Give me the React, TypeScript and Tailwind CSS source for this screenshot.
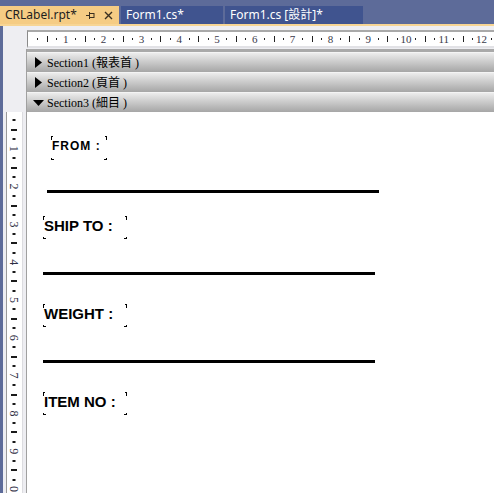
import React from 'react';

const UNIT = 37.8;

function HRuler() {
  const ticks: React.ReactNode[] = [];
  for (let k = 1; k < 50; k++) {
    const x = (k * UNIT) / 4;
    if (x > 470) break;
    if (k % 4 === 0) {
      ticks.push(
        <text key={k} x={x} y={11} fontSize={11} textAnchor="middle" fill="#3a3a4a" fontFamily="'Liberation Serif', serif">
          {k / 4}
        </text>
      );
    } else if (k % 4 === 2) {
      ticks.push(<rect key={k} x={Math.round(x)} y={4} width={1} height={6} fill="#222" />);
    } else {
      ticks.push(<rect key={k} x={Math.round(x)} y={6} width={1} height={2} fill="#222" />);
    }
  }
  return (
    <svg width={467} height={14} className="block">
      {ticks}
    </svg>
  );
}

function VRuler() {
  const ticks: React.ReactNode[] = [];
  const o = -1;
  for (let k = 1; k < 50; k++) {
    const y = o + (k * UNIT) / 4;
    if (y > 385) break;
    if (k % 4 === 0) {
      const n = (k / 4) % 10;
      ticks.push(
        <text
          key={k}
          x={7}
          y={y}
          fontSize={12}
          textAnchor="middle"
          dominantBaseline="central"
          fill="#2e2e44"
          fontFamily="'Liberation Serif', serif"
          transform={`rotate(90 7 ${y})`}
        >
          {n}
        </text>
      );
    } else if (k % 4 === 2) {
      ticks.push(<rect key={k} x={4} y={Math.round(y) - 1} width={6} height={2} fill="#1a1a1a" />);
    } else {
      ticks.push(<rect key={k} x={5.5} y={Math.round(y) - 1} width={3} height={2} fill="#1a1a1a" />);
    }
  }
  return (
    <svg width={15} height={381} className="block">
      {ticks}
    </svg>
  );
}

function Section({ label, open }: { label: string; open?: boolean }) {
  return (
    <div className="h-[20px] flex items-center bg-gradient-to-b from-[#ececec] to-[#a6a6a6] border-t border-[#f4f4f4]">
      <div className="w-[20px] flex justify-center pl-[2px]">
        {open ? (
          <svg width={11} height={6} viewBox="0 0 11 6">
            <polygon points="0,0 11,0 5.5,6" fill="#000" />
          </svg>
        ) : (
          <svg width={7} height={11} viewBox="0 0 7 11">
            <polygon points="0,0 7,5.5 0,11" fill="#000" />
          </svg>
        )}
      </div>
      <span className="text-[12px] leading-none text-black font-['Liberation_Serif','Noto_Sans_CJK_TC',serif] whitespace-pre">
        {label}
      </span>
    </div>
  );
}

function Field({ text, small }: { text: string; small?: boolean }) {
  return (
    <div
      className={`relative ${
        small ? 'ml-[24px] mt-[24px] w-[56px] h-[24px] pt-[4px] pl-[1px]' : 'ml-[16px] w-[84px] h-[23px] pt-[2px] pl-[1px]'
      }`}
    >
      <span className="absolute left-0 top-0 w-[2px] h-[4px] border-l border-t border-black" />
      <span className="absolute right-0 top-0 w-[2px] h-[4px] border-r border-t border-black" />
      <span className="absolute left-0 bottom-0 w-[3px] h-[2px] border-l border-b border-black" />
      <span className="absolute right-0 bottom-0 w-[3px] h-[2px] border-r border-b border-black" />
      <span
        className={`block leading-none font-bold text-black font-['Liberation_Sans',Arial,sans-serif] whitespace-pre ${
          small ? 'text-[12px] tracking-[1px]' : 'text-[15px]'
        }`}
      >
        {text}
      </span>
    </div>
  );
}

export default function App() {
  return (
    <div className="w-[494px] h-[493px] overflow-hidden bg-[#5d6b99] flex flex-col font-['Noto_Sans','Noto_Sans_CJK_TC',sans-serif]">
      {/* document tabs */}
      <div className="h-[24px] flex items-end gap-[2px]">
        <div className="w-[119px] h-[18px] bg-[#f5cc84] flex items-center pl-[5px] text-[12px] text-[#1e1e1e]">
          <span className="leading-none">CRLabel.rpt*</span>
          <svg width={9} height={7} viewBox="0 0 9 7" className="ml-[9px]">
            <line x1={0} y1={3.5} x2={3} y2={3.5} stroke="#3a3020" />
            <line x1={3.5} y1={0} x2={3.5} y2={7} stroke="#3a3020" />
            <rect x={3.5} y={1.5} width={4.5} height={4} fill="none" stroke="#3a3020" />
          </svg>
          <svg width={9} height={9} viewBox="0 0 9 9" className="ml-[9px]">
            <path d="M1 1 L8 8 M8 1 L1 8" stroke="#3a3020" strokeWidth={1.4} />
          </svg>
        </div>
        <div className="w-[102px] h-[18px] bg-[#40548f] flex items-center pl-[5px] text-[12px] text-white">
          <span className="leading-none">Form1.cs*</span>
        </div>
        <div className="w-[138px] h-[18px] bg-[#40548f] flex items-center pl-[5px] text-[12px] text-white">
          <span className="leading-none">Form1.cs [設計]*</span>
        </div>
      </div>
      <div className="h-[2px] bg-[#f7d594]" />

      {/* designer body */}
      <div className="flex-1 ml-[3px] bg-[#eeeef2] flex flex-col min-h-0">
        <div className="h-[4px]" />
        <div className="ml-[24px] border-t-2 border-[#a9a9a9] border-b-2 border-b-[#e2e2e6] bg-white border-l border-l-[#8a8a8a]">
          <HRuler />
        </div>
        <div className="h-[1px]" />
        <div className="flex-1 flex min-h-0">
          <div className="w-[24px] flex flex-col border-r border-[#a0a0a0]">
            <div className="h-[63px]" />
            <div className="ml-[3px] w-[17px] flex-1 bg-white border-l border-[#9a9a9a] border-r border-r-[#dcdce0]">
              <VRuler />
            </div>
          </div>
          <div className="flex-1 flex flex-col border-t-[3px] border-[#a9a9a9]">
            <Section label="Section1 (報表首 )" />
            <Section label="Section2 (頁首 )" />
            <Section label="Section3 (細目 )" open />
            <div className="flex-1 bg-white flex flex-col">
              <Field text="FROM :" small />
              <div className="ml-[20px] mt-[30px] w-[332px] h-[3px] bg-black" />
              <div className="mt-[23px]">
                <Field text="SHIP TO :" />
              </div>
              <div className="ml-[16px] mt-[33px] w-[332px] h-[3px] bg-black" />
              <div className="mt-[29px]">
                <Field text="WEIGHT :" />
              </div>
              <div className="ml-[16px] mt-[33px] w-[332px] h-[3px] bg-black" />
              <div className="mt-[29px]">
                <Field text="ITEM NO :" />
              </div>
            </div>
          </div>
        </div>
      </div>
    </div>
  );
}
